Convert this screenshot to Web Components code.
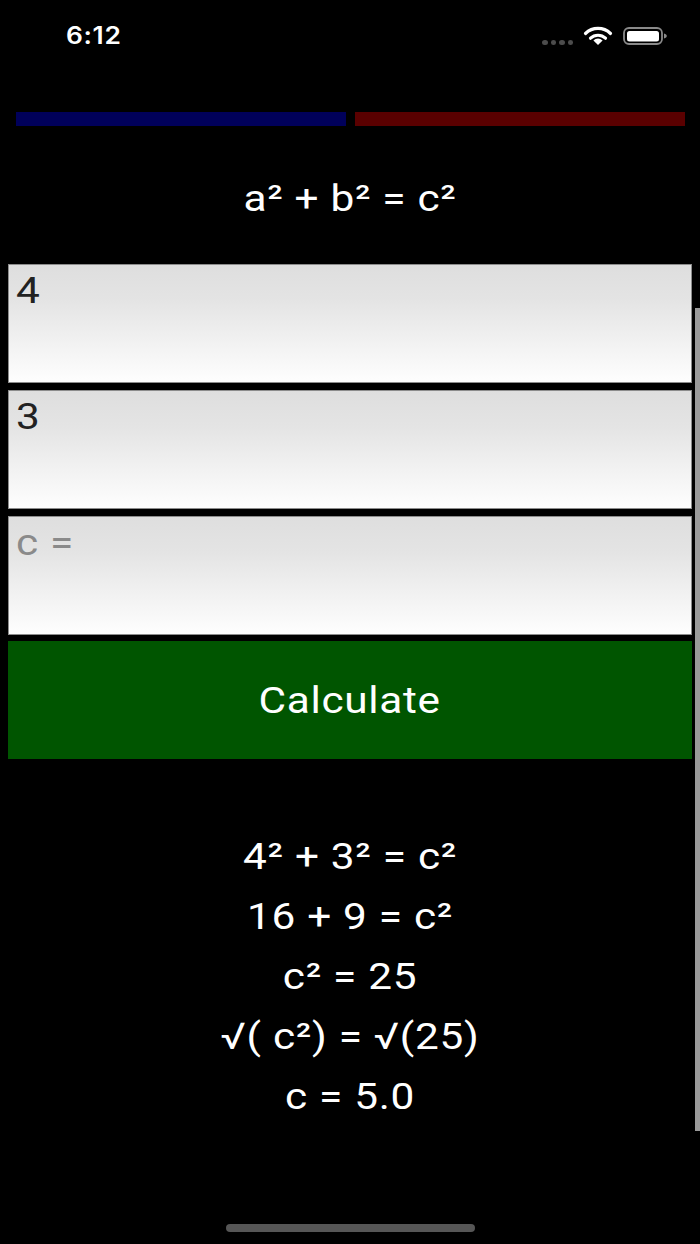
<!DOCTYPE html>
<html>
<head>
<meta charset="utf-8">
<style>
  html, body { margin: 0; background: #000; height: 100%; overflow: hidden; }
  body { font-family: Roboto, "Liberation Sans", sans-serif; color: #fff; }
</style>
</head>
<body>
<calc-app></calc-app>
<script>
class StatusBar extends HTMLElement {
    constructor() {
        super();
        this.shadowDOM = this.attachShadow({ mode: "open" });
    }
    connectedCallback() {
        this.shadowDOM.innerHTML = `
        <style>
            :host { display: flex; align-items: center; height: 72px; padding: 0 32px 0 66px; box-sizing: border-box; }
            .wrap { flex: 1; display: flex; }
            .time { font: 600 24px/1 Inter, "Liberation Sans", sans-serif; letter-spacing: 0.6px; color: #fff;
                transform: scaleX(1.1); transform-origin: left center; }
            .dots { display: flex; gap: 3px; margin: 12px 10px 0 0; }
            .dots i { width: 5.5px; height: 5px; border-radius: 50%; background: #4c4c4c; }
            svg { display: block; }
        </style>
        <span class="wrap"><span class="time">6:12</span></span>
        <span class="dots"><i></i><i></i><i></i><i></i></span>
        <svg width="30" height="20" viewBox="0 0 30 20" style="margin-right:10px">
            <path d="M2.5 7.5a18 18 0 0 1 25 0" fill="none" stroke="#fff" stroke-width="3.2" stroke-linecap="round"/>
            <path d="M7.5 12.2a11 11 0 0 1 15 0" fill="none" stroke="#fff" stroke-width="3.2" stroke-linecap="round"/>
            <path d="M15 19l-4.6-4.6a6.6 6.6 0 0 1 9.2 0z" fill="#fff"/>
        </svg>
        <svg width="45" height="18" viewBox="0 0 45 18">
            <rect x="1" y="1" width="38" height="16" rx="5" fill="none" stroke="#8a8a8a" stroke-width="1.8"/>
            <rect x="4" y="4" width="32" height="10.5" rx="2.5" fill="#fff"/>
            <path d="M41 6.5c1.8.4 2.8 1.3 2.8 2.500s-1 2.100-2.800 2.500z" fill="#8a8a8a"/>
        </svg>`;
    }
}
customElements.define("status-bar", StatusBar);

class ColorBars extends HTMLElement {
    constructor() {
        super();
        this.shadowDOM = this.attachShadow({ mode: "open" });
    }
    connectedCallback() {
        this.shadowDOM.innerHTML = `
        <style>
            :host { display: flex; gap: 9px; height: 14px; padding: 0 15px 0 16px; }
            div { flex: 1; }
            .blue { background: #00005a; }
            .red { background: #5a0000; }
        </style>
        <div class="blue"></div>
        <div class="red"></div>`;
    }
}
customElements.define("color-bars", ColorBars);

class MathField extends HTMLElement {
    constructor() {
        super();
        this.shadowDOM = this.attachShadow({ mode: "open" });
    }
    connectedCallback() {
        const hint = this.hasAttribute("hint");
        this.shadowDOM.innerHTML = `
        <style>
            :host { display: block; height: 119px; box-sizing: border-box; padding: 5px 7px; border: 1px solid #8c8c8c;
                background: linear-gradient(#dedede, #e4e4e4 30%, #fefefe);
                font: 37px/42px Roboto, sans-serif; letter-spacing: 0.6px; color: ${hint ? "#8a8a8a" : "#222"}; }
            span { display: inline-block; transform: scaleX(1.145); transform-origin: left center; }
        </style>
        <span><slot></slot></span>`;
    }
}
customElements.define("math-field", MathField);

class CalcButton extends HTMLElement {
    constructor() {
        super();
        this.shadowDOM = this.attachShadow({ mode: "open" });
    }
    connectedCallback() {
        this.shadowDOM.innerHTML = `
        <style>
            :host { display: flex; align-items: center; justify-content: center; height: 118px; background: #005500;
                font: 37px Roboto, sans-serif; letter-spacing: 0.6px; color: #fff; }
            span { display: inline-block; transform: scaleX(1.145); padding-top: 1px; }
        </style>
        <span><slot></slot></span>`;
    }
}
customElements.define("calc-button", CalcButton);

class CalcApp extends HTMLElement {
    constructor() {
        super();
        this.shadowDOM = this.attachShadow({ mode: "open" });
    }
    connectedCallback() {
        this.shadowDOM.innerHTML = `
        <style>
            :host { display: block; position: relative; height: 1244px; overflow: hidden; background: #000; color: #fff;
                font: 37px Roboto, sans-serif; letter-spacing: 0.6px; }
            color-bars { margin-top: 40px; }
            h1 { font: inherit; text-align: center; margin: 0; height: 138px; line-height: 146px; transform: scaleX(1.145); }
            .form { display: flex; flex-direction: column; gap: 7px; padding: 0 8px; }
            .lines { margin-top: 68px; text-align: center; line-height: 60px; transform: scaleX(1.145); }
            .scroll { position: absolute; right: 0; top: 308px; width: 5px; height: 823px; background: #9a9a9a; }
            .home { position: absolute; left: 226px; top: 1224px; width: 249px; height: 8px; border-radius: 4px; background: #565656; }
        </style>
        <status-bar></status-bar>
        <color-bars></color-bars>
        <h1>a² + b² = c²</h1>
        <div class="form">
            <math-field>4</math-field>
            <math-field>3</math-field>
            <math-field hint>c =</math-field>
            <calc-button style="margin-top:-1px">Calculate</calc-button>
        </div>
        <div class="lines">
            <div>4² + 3² = c²</div>
            <div>16 + 9 = c²</div>
            <div>c² = 25</div>
            <div>√( c²) = √(25)</div>
            <div>c = 5.0</div>
        </div>
        <div class="scroll"></div>
        <div class="home"></div>`;
    }
}
customElements.define("calc-app", CalcApp);
</script>
</body>
</html>
